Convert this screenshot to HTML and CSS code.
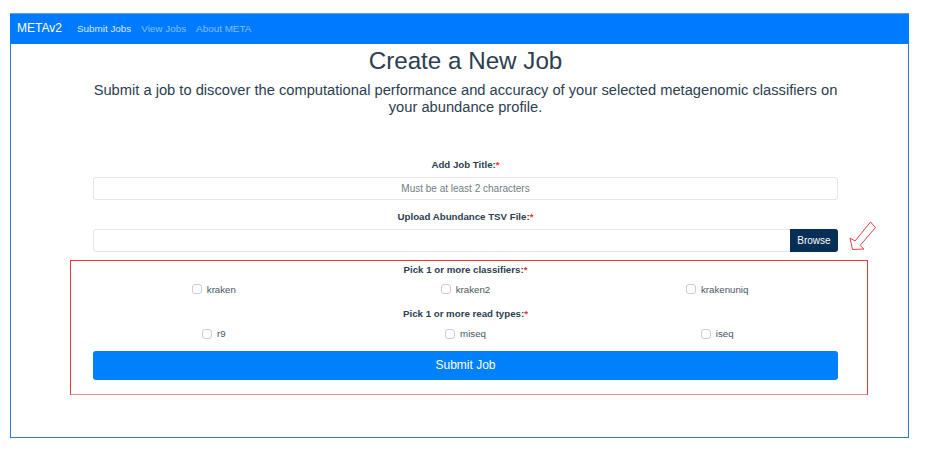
FILE: index.html
```html
<!DOCTYPE html>
<html lang="en">
<head>
<meta charset="utf-8">
<title>METAv2 - Create a New Job</title>
<link rel="stylesheet" href="styles.css">
</head>
<body>
<div class="frame">
  <nav class="navbar">
    <span class="brand">METAv2</span>
    <a class="nav-link active" href="#">Submit Jobs</a>
    <a class="nav-link" href="#">View Jobs</a>
    <a class="nav-link" href="#">About META</a>
  </nav>
  <main class="content">
    <h1 class="title">Create a New Job</h1>
    <p class="lead">Submit a job to discover the computational performance and accuracy of your selected metagenomic classifiers on your abundance profile.</p>
    <form class="job-form">
      <label class="field-label">Add Job Title:<span class="req">*</span></label>
      <input class="text-input" type="text" placeholder="Must be at least 2 characters">
      <label class="field-label spaced">Upload Abundance TSV File:<span class="req">*</span></label>
      <div class="file-row">
        <div class="file-input">
          <span class="file-box"></span>
          <span class="browse">Browse</span>
        </div>
        <svg class="arrow" width="30" height="32" viewBox="0 0 30 32">
          <polygon points="4.5,29.5 2,18 7,21 22.5,2 27.5,7.5 12,25.5 16,29" fill="#fff" stroke="#e8403f" stroke-width="1" stroke-linejoin="miter"/>
        </svg>
      </div>
      <div class="highlight">
        <div class="field-label">Pick 1 or more classifiers:<span class="req">*</span></div>
        <div class="check-row">
          <label class="check"><input type="checkbox"><span>kraken</span></label>
          <label class="check"><input type="checkbox"><span>kraken2</span></label>
          <label class="check"><input type="checkbox"><span>krakenuniq</span></label>
        </div>
        <div class="field-label spaced">Pick 1 or more read types:<span class="req">*</span></div>
        <div class="check-row second">
          <label class="check"><input type="checkbox"><span>r9</span></label>
          <label class="check"><input type="checkbox"><span>miseq</span></label>
          <label class="check"><input type="checkbox"><span>iseq</span></label>
        </div>
        <button class="submit" type="button">Submit Job</button>
      </div>
    </form>
  </main>
</div>
</body>
</html>
```

FILE: styles.css
```css
* { box-sizing: border-box; }

html, body {
  margin: 0;
  padding: 0;
  background: #fff;
  font-family: "Liberation Sans", Arial, sans-serif;
  color: #2c3e50;
}

.frame {
  margin: 13px 18px 0 10px;
  height: 425px;
  border: 1px solid #2a7ad2;
  border-top: none;
  box-shadow: 0 1px 0 #c2dbf3;
}

.navbar {
  height: 31px;
  margin: 0 -1px;
  background: #007bff;
  border-top: 1px solid #5d9ee0;
  display: flex;
  align-items: center;
  padding: 0 0 2px 7px;
}

.brand {
  color: #fff;
  font-size: 12px;
  margin-right: 10px;
}

.nav-link {
  color: rgba(255, 255, 255, 0.5);
  font-size: 9.9px;
  text-decoration: none;
  padding: 0 5px;
}

.nav-link.active {
  color: rgba(255, 255, 255, 0.85);
}

.content {
  padding: 3px 70px 0 82px;
  text-align: center;
}

.title {
  margin: 0;
  font-size: 24.2px;
  line-height: 28px;
  font-weight: normal;
}

.lead {
  margin: 6.5px -10px 0;
  font-size: 14.7px;
  line-height: 17.5px;
}

.job-form {
  margin-top: 42px;
}

.field-label {
  display: block;
  font-size: 9.7px;
  line-height: 12px;
  font-weight: bold;
  color: #2c3e50;
}

.field-label.spaced {
  margin-top: 11.7px;
}

.req {
  color: #e3342f;
}

.text-input {
  display: block;
  width: 100%;
  height: 23px;
  margin-top: 6px;
  border: 1px solid #e2e5e9;
  border-radius: 3px;
  font-family: inherit;
  font-size: 10px;
  text-align: center;
  color: #495057;
  background: #fff;
  outline: none;
}

.text-input::placeholder {
  color: #737b83;
}

.file-row {
  position: relative;
  margin-top: 5.6px;
}

.file-input {
  display: flex;
  height: 23px;
  border: 1px solid #e2e5e9;
  border-radius: 3px;
}

.file-box {
  flex: 1;
}

.browse {
  width: 48px;
  margin: -1px -1px -1px 0;
  background: #052f55;
  color: #fff;
  font-size: 10px;
  line-height: 23px;
  border-radius: 0 3px 3px 0;
}

.arrow {
  position: absolute;
  left: 755px;
  top: -9px;
}

.highlight {
  margin: 8px -30px 0 -23px;
  padding: 3px 29px 14.5px 22px;
  border: 1px solid #e8363e;
  border-bottom-color: #f08a8e;
}

.check-row {
  display: grid;
  grid-template-columns: repeat(3, 1fr);
  margin: 6.3px -5px 0;
  height: 14px;
}

.check-row.second {
  margin-top: 7px;
}

.check {
  justify-self: center;
  display: flex;
  align-items: center;
  gap: 5px;
  font-size: 9.7px;
  color: #4a5560;
}

.check input {
  appearance: none;
  -webkit-appearance: none;
  width: 10px;
  height: 10px;
  margin: 0;
  border: 1px solid #c8cdd2;
  border-radius: 3px;
  background: #fff;
}

.submit {
  display: block;
  width: 100%;
  height: 29px;
  margin-top: 10px;
  border: none;
  border-radius: 3px;
  background: #0080fa;
  color: #fff;
  font-family: inherit;
  font-size: 12px;
}
```
